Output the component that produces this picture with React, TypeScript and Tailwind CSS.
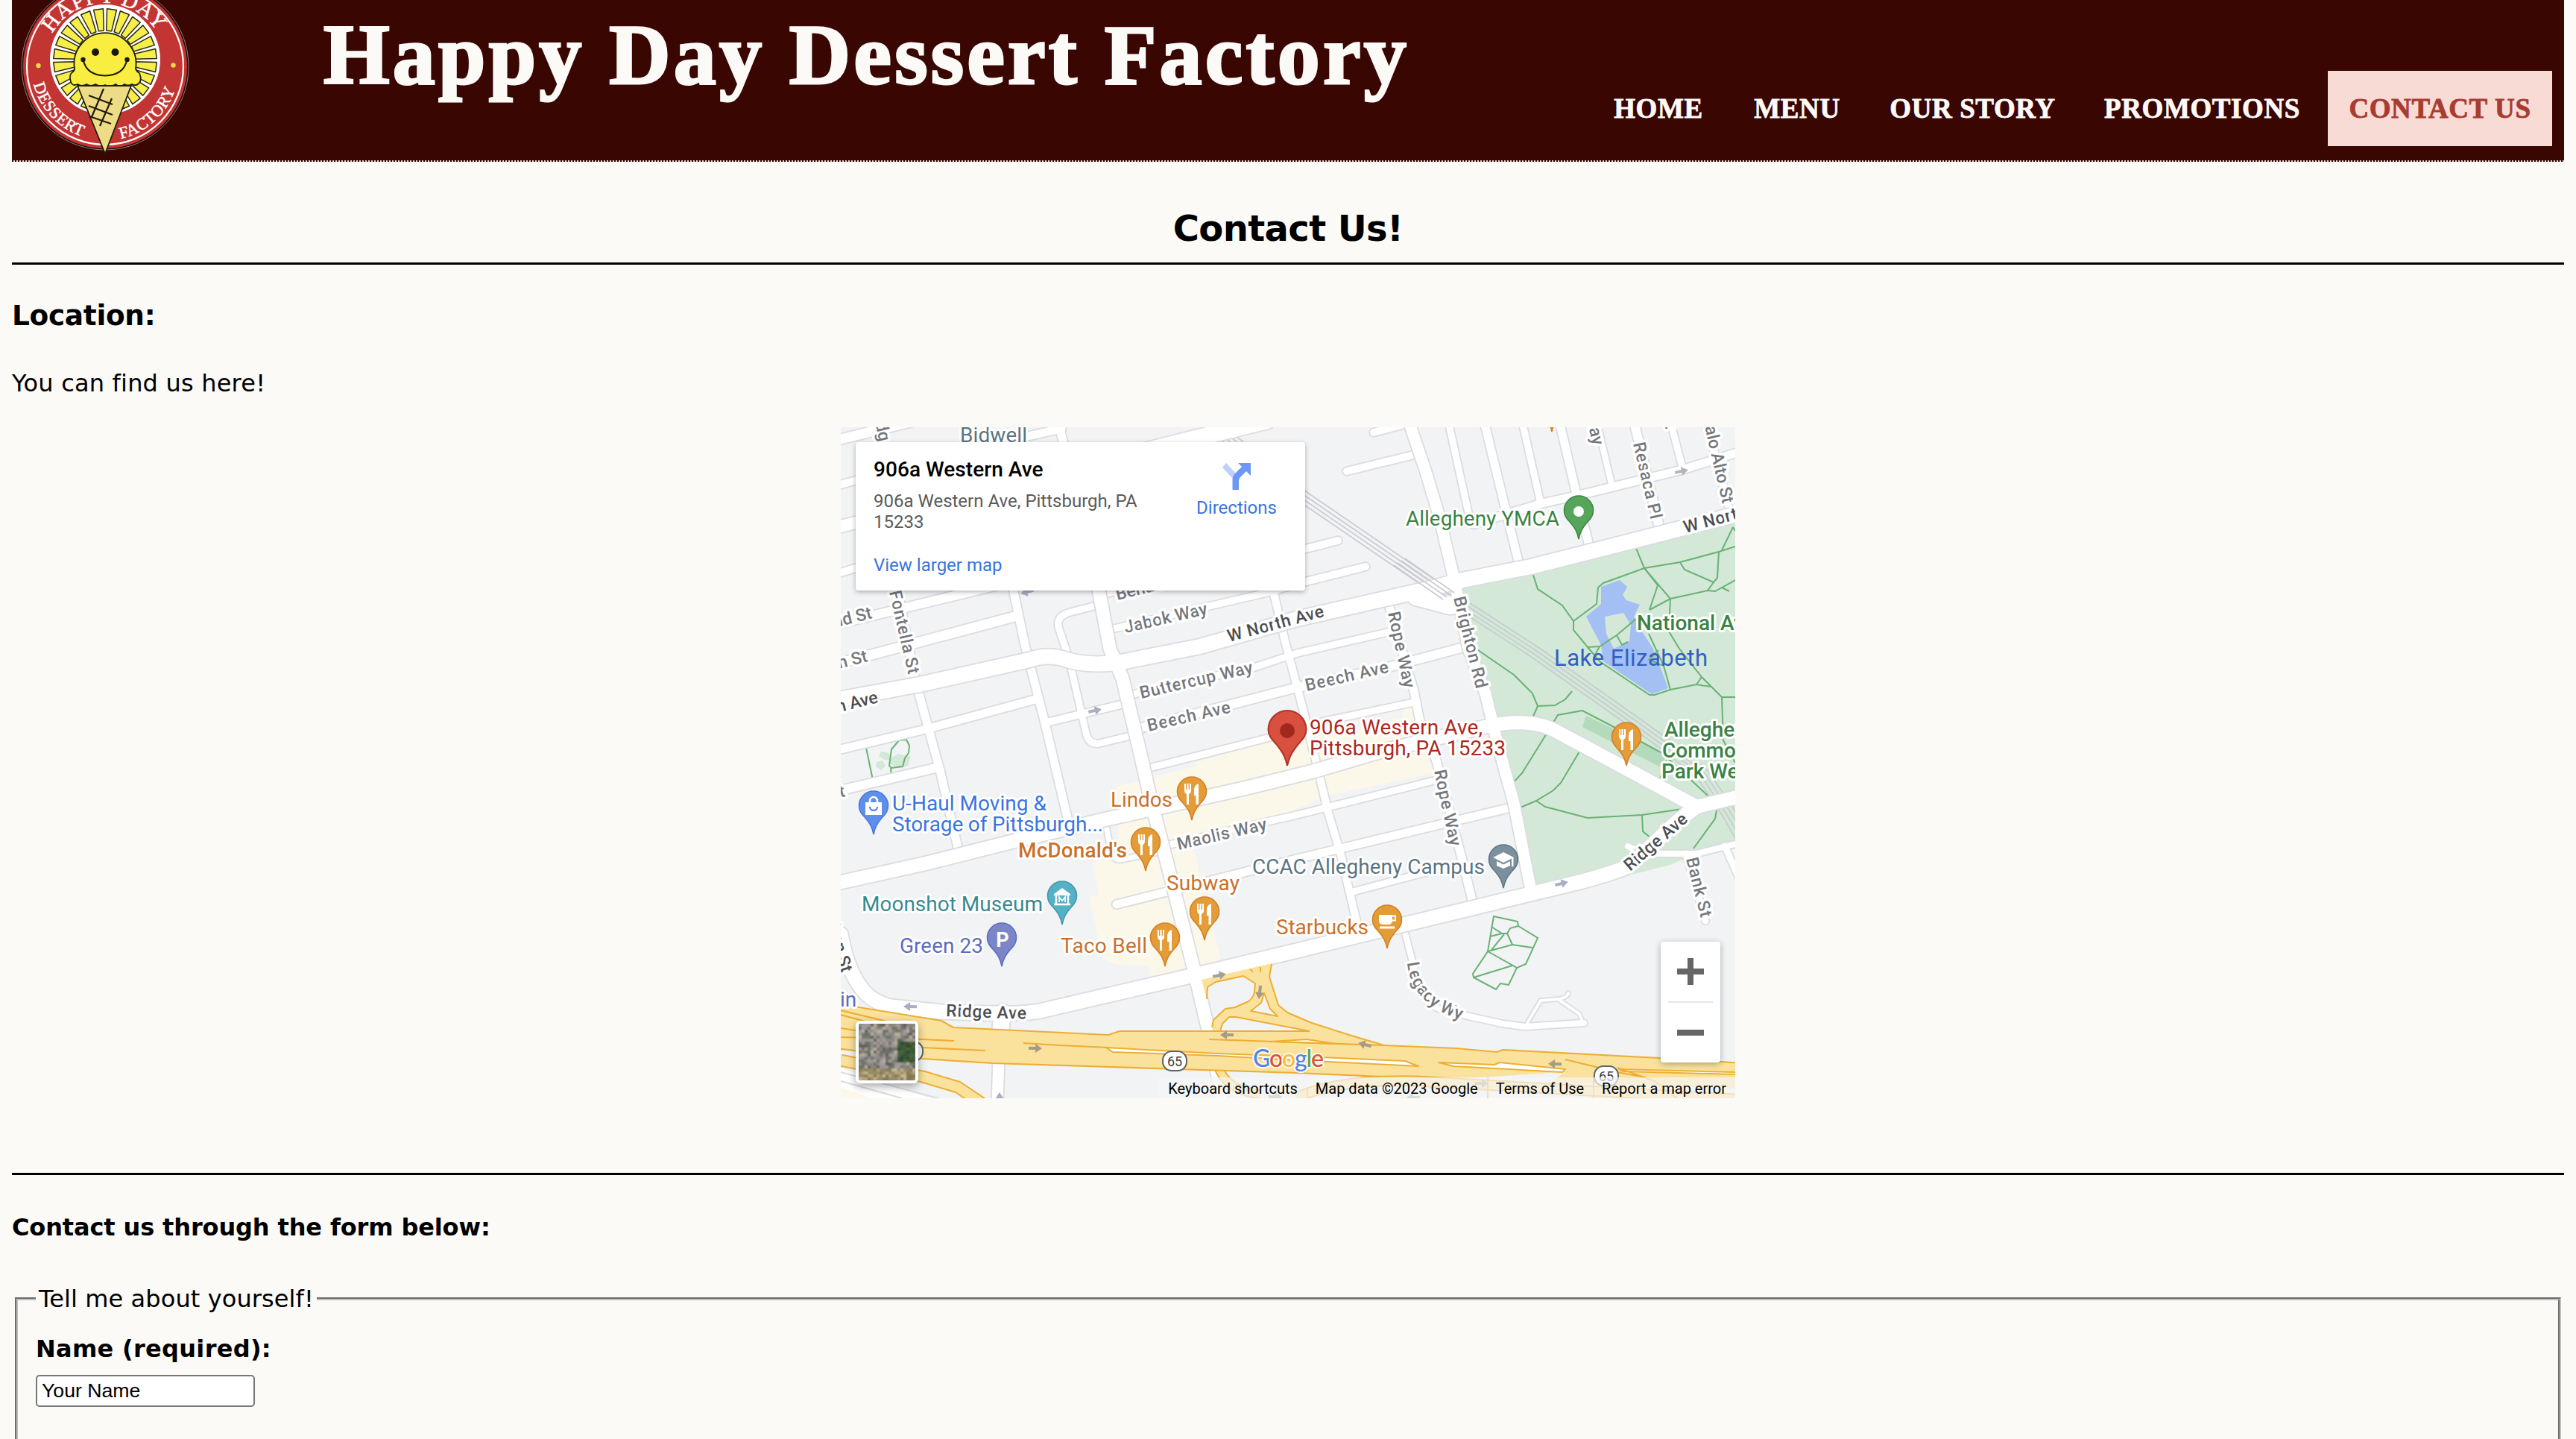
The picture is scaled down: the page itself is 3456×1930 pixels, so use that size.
import React from "react";

type Road = [width: number, d: string];

const minorRoads: Road[] = [
  [13, "M1128 589L1225 565"],
  [10, "M1128 650L1160 641"],
  [16, "M1128 706L1160 698"],
  [10, "M1128 768L1160 758"],
  [10, "M1740 739L1795 725"],
  [10, "M1740 783L1832 760"],
  [10, "M1843 580L1892 567"],
  [10, "M1807 632L1897 610"],
  [11, "M1370 587L1424 575"],
  [11, "M1420 565L1430 610"],
  [22, "M1540 604L1700 564"],
  [11, "M1183 573L1198 760L1228 913L1261 1033L1287 1145"],
  [12, "M1128 836L1400 770"],
  [13, "M1128 889L1361 827"],
  [11, "M1355 770L1375 865L1402 970L1434 1105"],
  [9, "M1471 812L1436 821Q1417 826 1420 841L1434 883L1457 983Q1460 999 1475 997L1512 988"],
  [11, "M1128 1005L1242 978L1389 938"],
  [10, "M1404 969L1504 945"],
  [9, "M1495 843L1622 813L1708 793L1751 780"],
  [9, "M1483 797L1570 775"],
  [9, "M1516 932L1683 895L1740 876L1866 847"],
  [12, "M1528 977L1736 923L1862 895L1964 868"],
  [9, "M1542 1030L1700 990L1778 967L1897 942"],
  [12, "M1128 1060L1255 1030"],
  [9, "M1569 1133L1700 1102L1740 1093L1924 1047"],
  [11, "M1498 1213L1740 1152L2027 1083"],
  [9, "M1815 1196L1950 1160"],
  [7, "M1484 1107L1490 1140Q1493 1154 1504 1153L1553 1143"],
  [10, "M1706 783L1724 860L1746 943L1767 1027L1782 1090L1799 1147L1822 1245"],
  [11, "M1862 807L1897 927L1906 973L1927 1020L1960 1147L1977 1215"],
  [9, "M1943 565L1972 697"],
  [11, "M1991 565L2040 765"],
  [9, "M2042 565L2067 675"],
  [11, "M2092 565L2115 663L2134 740"],
  [8, "M2142 565L2163 653"],
  [12, "M2192 565L2228 715"],
  [9, "M2241 565L2257 627"],
  [10, "M2289 565L2322 690"],
  [11, "M1977 703L2069 675L2123 663L2257 630L2340 604"],
  [8, "M2184 1135Q2200 1145 2238 1145L2276 1145L2340 1129"],
  [9, "M2262 1145L2288 1235"],
  [9, "M2314 1135L2332 1175"],
  [8, "M1882 1240L1897 1297Q1906 1345 1931 1353L1970 1363L2016 1373L2046 1377L2125 1372"],
  [4, "M2049 1372L2067 1342L2090 1340L2119 1360L2123 1370"],
  [4, "M2090 1340Q2103 1338 2104 1332"],
  [15, "M1340 1420L1338 1480"],
];

const majorRoads: Road[] = [
  [17, "M1470 770L1489 870L1506 910L1528 1003L1544 1073L1569 1170L1600 1293L1620 1377L1634 1443L1640 1480"],
  [15, "M1890 565L1912 630L1931 693L1950 773L1970 870L1993 930L2008 993L2031 1077L2054 1195"],
  [20, "M1120 939L1234 918L1381 885Q1404 877 1425 883Q1460 895 1504 888L1610 867L1740 830L1916 790L1962 778L2054 760L2192 725L2340 687"],
  [18, "M1120 1185L1242 1158L1365 1127L1487 1098L1569 1080L1671 1057L1760 1035L1855 1007L2000 973Q2058 962 2092 983L2180 1030L2276 1082L2340 1067"],
  [19, "M2276 1082Q2262 1092 2249 1103L2190 1158Q2185 1165 2123 1182L1855 1247L1740 1275L1606 1307L1528 1325L1395 1356Q1365 1362 1263 1357L1195 1350Q1170 1344 1157 1327Q1137 1303 1128 1253"],
  [22, "M1345 1358L1342 1385"],
  [24, "M1900 800L1945 812"],
];

const parkPaths = [
  "M2056 768L2063 790L2096 812L2111 833L2111 845L2130 868L2146 867L2169 852L2195 830",
  "M2111 833L2142 810L2144 788L2151 782L2206 762L2254 754L2306 740L2328 733",
  "M2194 733L2206 762L2241 803L2239 847L2253 870L2283 908L2310 935L2328 935",
  "M2213 818L2241 803L2291 792L2301 793L2328 778",
  "M2224 785L2206 762M2224 785L2213 818M2310 788L2320 793",
  "M2254 754L2260 764L2299 781L2304 775L2306 740M2299 781L2291 792M2325 707L2310 738M2325 707L2328 712",
  "M1983 872L2031 905L2056 930L2063 947L2086 946L2100 938L2109 927M2063 947L2056 963",
  "M2027 1053L2042 1037L2073 987L2090 959L2123 953L2165 975L2230 1010L2291 1067",
  "M2035 1085L2061 1074L2084 1060L2094 1050L2119 1008",
  "M2061 1074L2073 1082L2130 1097L2203 1093L2257 1085M2203 1093L2204 1115L2216 1125",
  "M2272 1138L2301 1098L2303 1087M2226 1047L2236 1020",
  "M2130 868L2146 887L2213 932L2220 932L2241 925L2276 918L2295 921M2241 925L2232 893L2212 850M2276 918L2283 908M2140 878L2146 867",
  "M2310 935L2312 993L2328 1023M2169 852L2176 865L2184 861M2232 893L2212 885L2225 872",
  "M2004 1229L2036 1236L2037 1242L2063 1258L2047 1293L2035 1298L2024 1321L2013 1319L2007 1327L1977 1311L1976 1306L1996 1276Z",
  "M1996 1276L2035 1298M1977 1311L2029 1295M1996 1276L2029 1267L2056 1271M2029 1267L2022 1252L2026 1245L2037 1242M2022 1252L2015 1252L2001 1243M1999 1256L2015 1252M2018 1253L2001 1274",
  "M1162 1003L1171 1046M1206 993L1216 992L1220 1000L1219 1010L1214 1017L1211 1028L1196 1030L1193 1027L1196 1005ZM1195 1030L1196 1040",
];

type Street = { t: string; x: number; y: number; r: number; len?: number; dark?: boolean; end?: boolean };
const streets: Street[] = [
  { t: "W North Ave", x: 1649, y: 861, r: -15, len: 133, dark: true },
  { t: "Jabok Way", x: 1510, y: 849, r: -13, len: 114 },
  { t: "Behan St", x: 1499, y: 805, r: -14 },
  { t: "Buttercup Way", x: 1531, y: 937, r: -13, len: 155 },
  { t: "Beech Ave", x: 1541, y: 981, r: -13, len: 114 },
  { t: "Beech Ave", x: 1753, y: 927, r: -13, len: 114 },
  { t: "Maolis Way", x: 1581, y: 1140, r: -13, len: 123 },
  { t: "Fontella St", x: 1193, y: 794, r: 77, len: 114 },
  { t: "Rope Way", x: 1862, y: 822, r: 78, len: 104 },
  { t: "Rope Way", x: 1924, y: 1034, r: 78, len: 104 },
  { t: "Brighton Rd", x: 1950, y: 802, r: 76, len: 126 },
  { t: "Resaca Pl", x: 2191, y: 595, r: 77, len: 105 },
  { t: "Palo Alto St", x: 2311, y: 676, r: 77, end: true },
  { t: "Way", x: 2137, y: 598, r: 77, end: true },
  { t: "St", x: 2235, y: 576, r: 77, end: true },
  { t: "ridg", x: 1180, y: 593, r: 77, end: true },
  { t: "W North Ave", x: 2261, y: 715, r: -15, len: 133, dark: true },
  { t: "nd St", x: 1171, y: 829, r: -14, end: true },
  { t: "in St", x: 1165, y: 887, r: -14, end: true },
  { t: "h Ave", x: 1179, y: 942, r: -14, dark: true, end: true },
  { t: "St", x: 1135, y: 1068, r: -14, end: true },
  { t: "Ridge Ave", x: 1269, y: 1363, r: 2, len: 108, dark: true },
  { t: "Ridge Ave", x: 2187, y: 1169, r: -41, len: 104, dark: true },
  { t: "Bank St", x: 2262, y: 1152, r: 76, len: 82 },
  { t: "Fulton St", x: 1129, y: 1305, r: 74, dark: true, end: true },
];

type Place = { t: string; x: number; y: number; len?: number; c: string; bold?: boolean };
const places: Place[] = [
  { t: "906a Western Ave,", x: 1757, y: 985, len: 232, c: "#ae2720" },
  { t: "Pittsburgh, PA 15233", x: 1757, y: 1013, len: 263, c: "#ae2720" },
  { t: "Lindos", x: 1490, y: 1082, len: 83, c: "#c9712a" },
  { t: "U-Haul Moving &", x: 1197, y: 1087, len: 207, c: "#3b74e0" },
  { t: "Storage of Pittsburgh...", x: 1197, y: 1115, len: 283, c: "#3b74e0" },
  { t: "McDonald's", x: 1366, y: 1150, len: 146, c: "#c9712a", bold: true },
  { t: "Moonshot Museum", x: 1156, y: 1222, len: 243, c: "#37898f" },
  { t: "Green 23", x: 1207, y: 1278, len: 112, c: "#5c6bc0" },
  { t: "Taco Bell", x: 1423, y: 1278, len: 116, c: "#c9712a" },
  { t: "Subway", x: 1565, y: 1194, len: 98, c: "#c9712a" },
  { t: "Starbucks", x: 1712, y: 1253, len: 124, c: "#c9712a" },
  { t: "CCAC Allegheny Campus", x: 1680, y: 1172, len: 312, c: "#5a7482" },
  { t: "Allegheny YMCA", x: 1886, y: 705, len: 206, c: "#3a8244" },
  { t: "National Aviary", x: 2196, y: 845, c: "#3a8244", bold: true },
  { t: "Allegheny", x: 2233, y: 988, c: "#3a8244", bold: true },
  { t: "Commons", x: 2230, y: 1016, c: "#3a8244", bold: true },
  { t: "Park West", x: 2229, y: 1044, c: "#3a8244", bold: true },
  { t: "Bidwell", x: 1288, y: 593, len: 90, c: "#5a7482" },
  { t: "in", x: 1127, y: 1350, c: "#5c6bc0" },
];

const Food = () => (
  <g fill="#fff">
    <path d="M-10 -49v9q0 4 3 5v14h3v-14q3 -1 3 -5v-9h-2v8h-1.4v-8h-2.2v8h-1.4v-8z" />
    <path d="M9 -49q-6 2 -6 9v7h2.5v12H9z" />
  </g>
);
const Bag = () => (
  <g>
    <path d="M-11 -43H11V-26H-11z" fill="#fff" />
    <path d="M-5 -43v-2a5 5 0 0 1 10 0v2" fill="none" stroke="#fff" strokeWidth="2.6" />
    <path d="M-5 -37a5 5 0 0 0 10 0" fill="none" stroke="#5b89ea" strokeWidth="2.4" />
  </g>
);
const Museum = () => (
  <g>
    <path d="M0 -49L11 -41v2h-22v-2z" fill="#fff" />
    <path d="M-8 -39v11M8 -39v11" stroke="#fff" strokeWidth="2.4" />
    <path d="M-11 -27h22" stroke="#fff" strokeWidth="2.6" />
    <path d="M-4 -30v-7l4 5l4 -5v7" fill="none" stroke="#fff" strokeWidth="1.8" />
  </g>
);
const Campus = () => (
  <g fill="#fff">
    <path d="M0 -48L14 -41L0 -34L-14 -41z" />
    <path d="M-9 -36L0 -31.500L9 -36v6L0 -26L-9 -30z" />
    <path d="M11 -41h2.500v12H11z" />
  </g>
);
const Cup = () => (
  <g>
    <path d="M-11 -45H7v7q0 6 -6 6h-6q-6 0 -6 -6z" fill="#fff" />
    <path d="M6 -43.500h5v6H6" fill="none" stroke="#fff" strokeWidth="2" />
    <path d="M-10 -28H10" stroke="#fff" strokeWidth="3" />
  </g>
);

const pins: { x: number; y: number; f: string; s: string; g: React.ReactNode }[] = [
  { x: 2118, y: 723, f: "#57a55a", s: "#3c8643", g: <circle cy="-37" r="7" fill="#fff" /> },
  { x: 1599, y: 1100, f: "#e39c37", s: "#cf8229", g: <Food /> },
  { x: 1537, y: 1168, f: "#e39c37", s: "#cf8229", g: <Food /> },
  { x: 1172, y: 1119, f: "#5f8eec", s: "#4a78da", g: <Bag /> },
  { x: 1616, y: 1261, f: "#e39c37", s: "#cf8229", g: <Food /> },
  { x: 1563, y: 1296, f: "#e39c37", s: "#cf8229", g: <Food /> },
  {
    x: 1344, y: 1296, f: "#7a86c8", s: "#5c6bc0",
    g: <text x="1" y="-26" textAnchor="middle" fill="#fff" fontSize="27" fontWeight="700">P</text>,
  },
  { x: 1425, y: 1240, f: "#55b1c6", s: "#4398ab", g: <Museum /> },
  { x: 1861, y: 1272, f: "#e39c37", s: "#cf8229", g: <Cup /> },
  { x: 2017, y: 1191, f: "#7b909c", s: "#5f7886", g: <Campus /> },
  { x: 2182, y: 1027, f: "#e39c37", s: "#cf8229", g: <Food /> },
  { x: 2082, y: 579, f: "#e39c37", s: "#cf8229", g: null },
];

const arrows: [number, number, number, string][] = [
  [1469, 953, -12, "#a9aec4"],
  [1378, 794, 165, "#a9aec4"],
  [2256, 632, -12, "#b3b5ba"],
  [2095, 1185, -14, "#a9aec4"],
  [1221, 1350, 182, "#a9aec4"],
  [1636, 1308, -12, "#a3a195"],
  [1690, 1331, 97, "#a89b86"],
  [1646, 1388, 180, "#a89b86"],
  [1389, 1406, 2, "#a89b86"],
  [1831, 1401, 195, "#a89b86"],
  [2086, 1427, 182, "#a89b86"],
  [1341, 1474, -90, "#a9aec4"],
  [1988, 1453, 0, "#a89b86"],
  [1896, 1472, 180, "#a89b86"],
  [1711, 1471, 0, "#a89b86"],
];

const shields: [number, number][] = [[1576, 1423], [2155, 1443], [1222, 1410]];

const trackOffsets = [-10, -5, 0, 5];

function Roads({ list }: { list: Road[] }) {
  return (
    <g fill="none" strokeLinecap="round" strokeLinejoin="round">
      {list.map(([w, d], i) => <path key={`c${i}`} d={d} stroke="#dadce0" strokeWidth={w + 3.5} />)}
      {list.map(([w, d], i) => <path key={`f${i}`} d={d} stroke="#fff" strokeWidth={w} />)}
    </g>
  );
}

function Tracks({ d }: { d: string }) {
  return (
    <g fill="none" stroke="#c8cad0" strokeWidth="1.6">
      {trackOffsets.map((o) => <path key={o} transform={`translate(${o} ${-o * 0.6})`} d={d} />)}
    </g>
  );
}

function Highway() {
  const band = "M1128 1422L1238 1444L1285 1458L1318 1480";
  return (
    <g fill="none" strokeLinejoin="round">
      <path d={band} stroke="#edae35" strokeWidth="17" />
      <path d={band} stroke="#fae29c" strokeWidth="13" />
      {/* interchange ramps */}
      <path
        fillRule="evenodd"
        d="M1612 1314L1706 1292L1703 1310L1715 1348L1727 1358L1760 1372L1810 1388L1857 1402L1757 1383L1658 1364L1649 1364L1640 1373L1637 1386H1626L1628 1368L1644 1353L1657 1351L1675 1343Q1682 1338 1683 1330L1684 1319L1668 1309L1631 1317L1620 1324L1619 1340zM1696 1332L1692 1345L1678 1356L1714 1363L1704 1353z"
        fill="#fae29c"
      />
      <path
        d="M1706 1293L1703 1310L1715 1348L1727 1358L1760 1372L1810 1388L1857 1402M1757 1383L1658 1364L1649 1364L1640 1373L1637 1383M1626 1378L1628 1368L1644 1353L1657 1351L1675 1343Q1682 1338 1683 1330L1684 1319L1668 1309L1631 1317L1620 1324L1619 1340M1696 1332L1692 1345L1678 1356L1714 1363L1704 1353zM1691 1297V1304M1677 1300L1681 1303"
        stroke="#edae35" strokeWidth="2"
      />
      <path d="M1634 1430Q1645 1462 1690 1468" stroke="#edae35" strokeWidth="13" />
      <path d="M1634 1430Q1645 1462 1690 1468" stroke="#fae29c" strokeWidth="9" />
      <path
        d="M1128 1347L1263 1369L1279 1378L1487 1388L1502 1383L1757 1383L1857 1402L1954 1406L2008 1411L2016 1408L2226 1419L2340 1426V1443L2110 1437L1941 1448L1740 1439L1332 1426L1238 1420L1120 1406V1345z"
        fill="#fae29c"
      />
      <path
        d="M1128 1347L1263 1369L1279 1378L1487 1388L1502 1383L1757 1383M1855 1402L1954 1406L2008 1411L2016 1408L2226 1419L2340 1426M1941 1448L1740 1439L1332 1426L1238 1420L1120 1406"
        stroke="#edae35" strokeWidth="2.2"
      />
      <path d="M1740 1472Q1790 1448 1900 1450L2328 1474" stroke="#edae35" strokeWidth="15" />
      <path d="M1740 1472Q1790 1448 1900 1450L2328 1474" stroke="#fae29c" strokeWidth="11" />
      <path d="M2104 1434L2328 1440L2340 1460L2080 1452z" fill="#fae29c" />
      <g fill="#fff" stroke="#edae35" strokeWidth="2">
        <path d="M1484 1405L1634 1413L1770 1418L1885 1423L1903 1430L1740 1422L1634 1416L1493 1411z" />
        <path d="M1930 1425L2005 1428L2012 1425L2100 1434L2096 1438L1950 1430z" />
        <path d="M2172 1434L2330 1438V1441L2178 1437z" />
        <path d="M1705 1397L1753 1394L1793 1400z" />
      </g>
      <g stroke="#edae35" strokeWidth="2.2">
        <path d="M1128 1355L1190 1370M1128 1361L1180 1375M1128 1379L1160 1384M1128 1391L1238 1394L1280 1396M1373 1399L1422 1402L1487 1405" />
        <path d="M1238 1405L1322 1409M1622 1394L1740 1398L1855 1402M2100 1421L2170 1438L2207 1445M2170 1432L2220 1450L2250 1473" />
        <path d="M1996 1445V1473M2138 1445V1473M1754 1458V1473" />
      </g>
    </g>
  );
}

function MapCanvas() {
  return (
    <svg className="block h-[900px] w-[1200px]" viewBox="1128 573 1200 900" fontFamily="Roboto, sans-serif">
      <rect x="1128" y="573" width="1200" height="900" fill="#f1f3f5" />

      {/* commercial corridor */}
      <path
        d="M1498 1055L1604 1028V1023L1732 985L1778 985L1882 962V950L1895 948L1922 1037L1778 1068L1728 1090L1602 1126L1602 1140L1620 1215L1637 1283V1290L1544 1310L1540 1295Q1490 1298 1479 1283L1461 1203L1474 1200L1466 1157L1500 1147V1107z"
        fill="#fcf8e9"
      />

      {/* Allegheny Commons */}
      <path d="M1955 783L2328 692V1131L2276 1145L2241 1160L2157 1181L2052 1195L2030 1077L1993 930z" fill="#d3e8d7" />
      <path d="M2128 960L2180 985L2237 1013L2226 1028L2123 975z" fill="#b3dabb" />
      <path d="M2148 787L2173 778L2183 787L2177 798L2182 805L2200 811L2192 827L2203 847L2218 870L2238 923L2216 931L2151 887L2148 865L2128 827L2148 810z" fill="#a3bff4" />
      <path d="M2153 827L2178 822L2188 838L2186 860L2165 870L2155 850z" fill="#d3e8d7" />
      <path d="M1182 1008l10 2l4 8l-8 2l-9 -6zM1176 1022l8 -2l4 7l-6 6l-7 -5zM1196 1016l9 -5l17 4l-4 12l-14 3l-10 -6z" fill="#d3e8d7" />

      <Tracks d="M1624 565L1751 665L1941 795L2060 872L2161 943L2237 997L2287 1037L2322 1090L2345 1130" />
      <g fill="none" stroke="#68b274" strokeWidth="2">
        {parkPaths.map((d) => <path key={d} d={d} />)}
      </g>

      {/* rail yard in the south-west corner */}
      <path d="M1120 1430L1270 1480H1120z" fill="#fff" />
      <g stroke="#dadce0" strokeWidth="2">
        <path d="M1128 1438L1262 1474M1128 1450L1210 1473M1128 1462L1162 1473" />
      </g>
      <path d="M1128 1458L1168 1473H1128z" fill="#fcf8e9" />

      <Roads list={minorRoads} />
      <Roads list={majorRoads} />
      <Tracks d="M1880 752L1946 798" />
      <Highway />

      {arrows.map(([x, y, r, c]) => (
        <path key={`${x}-${y}`} transform={`translate(${x} ${y}) rotate(${r})`} d="M-9 -2H0V-6L9 0L0 6V2H-9z" fill={c} />
      ))}

      <g fontSize="23" fontWeight="500" stroke="#fff" strokeWidth="7" strokeLinejoin="round" style={{ paintOrder: "stroke" }}>
        {streets.map((s, i) => (
          <text
            key={i}
            transform={`translate(${s.x} ${s.y}) rotate(${s.r})`}
            textLength={s.len}
            textAnchor={s.end ? "end" : "start"}
            fill={s.dark ? "#4b4e53" : "#74787d"}
          >
            {s.t}
          </text>
        ))}
        <path id="legacy-way" d="M1888 1291Q1894 1352 1972 1371" fill="none" stroke="none" />
        <text fill="#74787d"><textPath href="#legacy-way" textLength="112">Legacy Wy</textPath></text>
      </g>

      {shields.map(([x, y]) => (
        <g key={x}>
          <rect x={x - 16} y={y - 13} width="32" height="26" rx="12" fill="#fff" stroke="#5f6368" strokeWidth="2" />
          <text x={x} y={y + 6.5} textAnchor="middle" fontSize="18" fill="#3c4043">65</text>
        </g>
      ))}

      {pins.map((p) => (
        <g key={`${p.x}-${p.y}`} transform={`translate(${p.x} ${p.y})`}>
          <path
            d="M0 0C-2 -10 -5 -15 -11 -22C-17 -28 -19.500 -32 -19.500 -38.500A19.500 19.500 0 0 1 19.500 -38.500C19.500 -32 17 -28 11 -22C5 -15 2 -10 0 0Z"
            fill={p.f} stroke={p.s} strokeWidth="1.6"
          />
          {p.g}
        </g>
      ))}
      <g transform="translate(1727 1027)">
        <path d="M0 0C-3 -14 -8 -20 -14 -28C-22 -37 -25.500 -41 -25.500 -48.500A25.500 25.500 0 0 1 25.500 -48.500C25.500 -41 22 -37 14 -28C8 -20 3 -14 0 0Z" fill="#d8503f" stroke="#b3312c" strokeWidth="2" />
        <circle cy="-47" r="10" fill="#a1281f" />
      </g>

      <g fontSize="28" stroke="#fff" strokeWidth="6" strokeLinejoin="round" style={{ paintOrder: "stroke" }}>
        {places.map((p) => (
          <text key={p.t} x={p.x} y={p.y} textLength={p.len} fill={p.c} fontWeight={p.bold ? 500 : 400}>{p.t}</text>
        ))}
      </g>
      <text x="2085" y="893" textLength="206" fontSize="31" fill="#2f60c2">Lake Elizabeth</text>

      <text x="1681" y="1431" textLength="95" fontSize="32" fontFamily="Lato, sans-serif" fontWeight="500" stroke="#fff8e8" strokeWidth="4" style={{ paintOrder: "stroke" }}>
        <tspan fill="#5383ec">G</tspan>
        <tspan fill="#d85040">o</tspan>
        <tspan fill="#f1be42">o</tspan>
        <tspan fill="#5383ec">g</tspan>
        <tspan fill="#58a55c">l</tspan>
        <tspan fill="#d85040">e</tspan>
      </text>
    </svg>
  );
}

const aerialTones = ["#8d8a86", "#6d6f6c", "#a59f95", "#77756f", "#6a7266", "#b9b09c", "#8b857a", "#5f5c5b", "#9a9690", "#a29aa0"];
const woodTones = ["#35542f", "#2c4a2d", "#4a6340", "#3d5c38"];
const duneTones = ["#b7a678", "#9c8d62", "#c5b78f", "#86784f", "#8f8a70"];

function AerialThumb() {
  let seed = 7;
  const rand = () => {
    seed = (seed * 16807) % 2147483647;
    return seed / 2147483647;
  };
  const cells: React.ReactNode[] = [];
  for (let y = 0; y < 19; y++) {
    for (let x = 0; x < 19; x++) {
      const tones = x > 12 && y > 5 && y < 13 ? woodTones : y > 14 ? duneTones : aerialTones;
      cells.push(<rect key={`${x}-${y}`} x={x * 4} y={y * 4} width="4.2" height="4.2" fill={tones[Math.floor(rand() * tones.length)]} />);
    }
  }
  return (
    <svg viewBox="0 0 76 76" className="size-full">
      <defs><filter id="soft"><feGaussianBlur stdDeviation="1.1" /></filter></defs>
      <rect width="76" height="76" fill="#85807a" />
      <g filter="url(#soft)">{cells}</g>
    </svg>
  );
}

function LocationMap() {
  return (
    <div className="relative mx-auto h-[900px] w-[1200px] overflow-hidden font-[Roboto,sans-serif]">
      <MapCanvas />

      <div className="absolute left-5 top-5 flex h-[199px] w-[603px] rounded-[4px] bg-white pl-6 pt-[22px] shadow-[0_2px_6px_rgba(0,0,0,0.3)]">
        <div className="w-[400px]">
          <div className="text-[28px] leading-[30px] font-medium tracking-[0.05px] text-black">906a Western Ave</div>
          <div className="mt-[13px] text-[24px] leading-7 text-[#5b5b5b]">906a Western Ave, Pittsburgh, PA 15233</div>
          <div className="mt-[30px] text-[24px] leading-7 text-[#3a74e0]">View larger map</div>
        </div>
        <div className="ml-[24px] flex w-[126px] flex-col items-center pt-[6px]">
          <svg viewBox="0 0 38 36" className="h-9 w-[38px]">
            <path d="M5 0L0 6L14 21L18 14z" fill="#bdcffb" />
            <path d="M21 0H38V17L32 11L24 19Q22 21 22 25V36H13.500V23Q13.500 18 17 14L26 5z" fill="#6d97f5" />
          </svg>
          <div className="mt-[10px] text-[24px] leading-7 text-[#3a74e0]">Directions</div>
        </div>
      </div>

      <div className="absolute bottom-12 right-5 flex h-[162px] w-20 flex-col items-center rounded-[4px] bg-white text-[#666] shadow-[0_2px_8px_rgba(0,0,0,0.3)]">
        <svg viewBox="0 0 36 36" className="mt-[22px] size-9"><path d="M14 0h8v14h14v8H22v14h-8V22H0v-8h14z" fill="currentColor" /></svg>
        <div className="mt-[22px] h-[2px] w-[60px] bg-[#e6e6e6]" />
        <div className="mt-[36px] h-2 w-9 bg-current" />
      </div>

      <div className="absolute bottom-5 left-5 size-[84px] overflow-hidden rounded-[6px] border-4 border-white bg-white shadow-[0_4px_12px_rgba(0,0,0,0.35)]">
        <AerialThumb />
      </div>

      <div className="absolute bottom-0 right-0 flex h-7 items-center gap-[24px] whitespace-nowrap bg-[#f5f5f5]/70 pl-3 pr-3 pt-px text-[20px] text-black">
        <span>Keyboard shortcuts</span>
        <span>Map data ©2023 Google</span>
        <span>Terms of Use</span>
        <span>Report a map error</span>
      </div>
    </div>
  );
}

function Logo() {
  return (
    <svg viewBox="16 0 250 215" className="h-[215px] w-[250px] shrink-0" fontFamily="Liberation Serif, serif">
      <circle cx="141" cy="89" r="112" fill="#1c0f0d" stroke="#8f7b78" strokeWidth="1" />
      <circle cx="141" cy="89" r="110" fill="#c23533" />
      <circle cx="141" cy="89" r="105" fill="none" stroke="#fff" strokeWidth="2.2" />
      <circle cx="141" cy="80" r="74" fill="#fff" />
      <g fill="#f7ee4a" stroke="#2b2a10" strokeWidth="1.5" strokeLinejoin="round">
        {Array.from({ length: 24 }, (_, i) => (
          <path key={i} d="M-3.500 -40L-6.500 -69H6.500L3.500 -40z" transform={`translate(141 81) rotate(${7.5 + i * 15})`} />
        ))}
      </g>
      <path
        d="M100 92A41.500 41.500 0 1 1 182 92Q183 96 187 98Q191 108 186 112Q182 116 177 113Q172 116 167 113Q161 118 155 113Q148 118 141 114Q134 117 128 113Q122 117 116 113Q110 117 104 113Q97 116 95 110Q92 100 97 97Q100 95 100 92z"
        fill="#f9ee3f" stroke="#1f1d0c" strokeWidth="1.8"
      />
      <path d="M104 115L176 115L141 206z" fill="#eedb85" stroke="#1f1d0c" strokeWidth="1.8" strokeLinejoin="round" />
      <path d="M119 128L151 140M119 142L151 154M120 156L149 166M139 119L123 157M150 132L134 169" stroke="#1f1d0c" strokeWidth="2.2" />
      <circle cx="128" cy="70" r="5" fill="#1a1805" />
      <circle cx="154.500" cy="70" r="5" fill="#1a1805" />
      <circle cx="111.500" cy="80" r="3.200" fill="#1a1805" />
      <circle cx="170.500" cy="80" r="3.200" fill="#1a1805" />
      <path d="M111.500 80Q116 101 141 101.500Q166 101 170.500 80" fill="none" stroke="#1a1805" strokeWidth="2" />
      <circle cx="51.500" cy="88" r="3.200" fill="#f4d843" />
      <circle cx="232.500" cy="87.500" r="3.200" fill="#f4d843" />
      <path id="arc-top" d="M70 45A82 82 0 0 1 212 45" fill="none" />
      <path id="arc-left" d="M45 113A99 99 0 0 0 114 184" fill="none" />
      <path id="arc-right" d="M162 186A99 99 0 0 0 236 116" fill="none" />
      <g fill="#fff" stroke="#fff" strokeWidth="0.5">
        <text fontSize="29"><textPath href="#arc-top" textLength="168">HAPPY DAY</textPath></text>
        <text fontSize="22"><textPath href="#arc-left" textLength="99">DESSERT</textPath></text>
        <text fontSize="22"><textPath href="#arc-right" textLength="103">FACTORY</textPath></text>
      </g>
    </svg>
  );
}

function Header() {
  return (
    <header className="mx-4 h-[217px] bg-[#390602]">
      <div className="flex h-[215px] justify-between overflow-hidden pr-4">
        <div className="flex">
          <Logo />
          <h1 className="mt-[2px] ml-[168px] whitespace-nowrap font-['Liberation_Serif',serif] text-[114px] leading-[144px] font-bold tracking-[4.2px] text-[#fcfaf6] [-webkit-text-stroke:3px_#fcfaf6]">
            Happy Day Dessert Factory
          </h1>
        </div>
        <nav className="mt-[95px] flex h-[101px] gap-[7.5px] whitespace-nowrap text-center font-['Liberation_Serif',serif] text-[37px] leading-[101px] font-bold tracking-[0.6px] text-[#fcfaf6] [-webkit-text-stroke:0.8px_currentColor]">
          <a className="w-[180px]">HOME</a>
          <a className="w-[177px]">MENU</a>
          <a className="w-[279px]">OUR STORY</a>
          <a className="w-[322px]">PROMOTIONS</a>
          <a className="w-[301px] bg-[#f8dbd5] text-[#a83b32]">CONTACT US</a>
        </nav>
      </div>
      <div className="h-[2px] bg-[repeating-linear-gradient(90deg,#390602_0_2px,#e3d8d5_2px_4px)]" />
    </header>
  );
}

export default function App() {
  return (
    <div className="h-[1930px] w-full overflow-hidden bg-[#fbfaf6] font-['DejaVu_Sans',sans-serif] text-[32px] leading-[38px] text-black">
      <Header />
      <main className="mx-4">
        <h2 className="mt-[60px] h-[75px] text-center text-[48px] leading-[58px] font-bold tracking-[-0.6px]">Contact Us!</h2>
        <div className="h-[3px] bg-black" />
        <h3 className="mt-[45px] text-[37.44px] leading-[46px] font-bold tracking-[-0.3px]">Location:</h3>
        <p className="mt-[49px] tracking-[0.2px]">You can find us here!</p>
        <div className="mt-[40px]"><LocationMap /></div>
        <div className="mt-[100px] h-[3px] bg-black" />
        <h4 className="mt-[51px] leading-[38px] font-bold tracking-[-0.13px]">Contact us through the form below:</h4>
        <fieldset className="mx-1 mt-[58px] h-[260px] border-4 border-[#c0c0c0] px-6 [border-style:groove]">
          <legend className="px-1 leading-[38px] tracking-[0.1px]">Tell me about yourself!</legend>
          <label className="mt-[28px] block leading-[40px] font-bold tracking-[0.3px]">Name (required):</label>
          <input
            className="mt-[15px] block h-[43px] w-[294px] rounded-[5px] border-2 border-[#767676] bg-white px-[6px] font-['Liberation_Sans',sans-serif] text-[26.67px]"
            defaultValue="Your Name"
          />
        </fieldset>
      </main>
    </div>
  );
}
